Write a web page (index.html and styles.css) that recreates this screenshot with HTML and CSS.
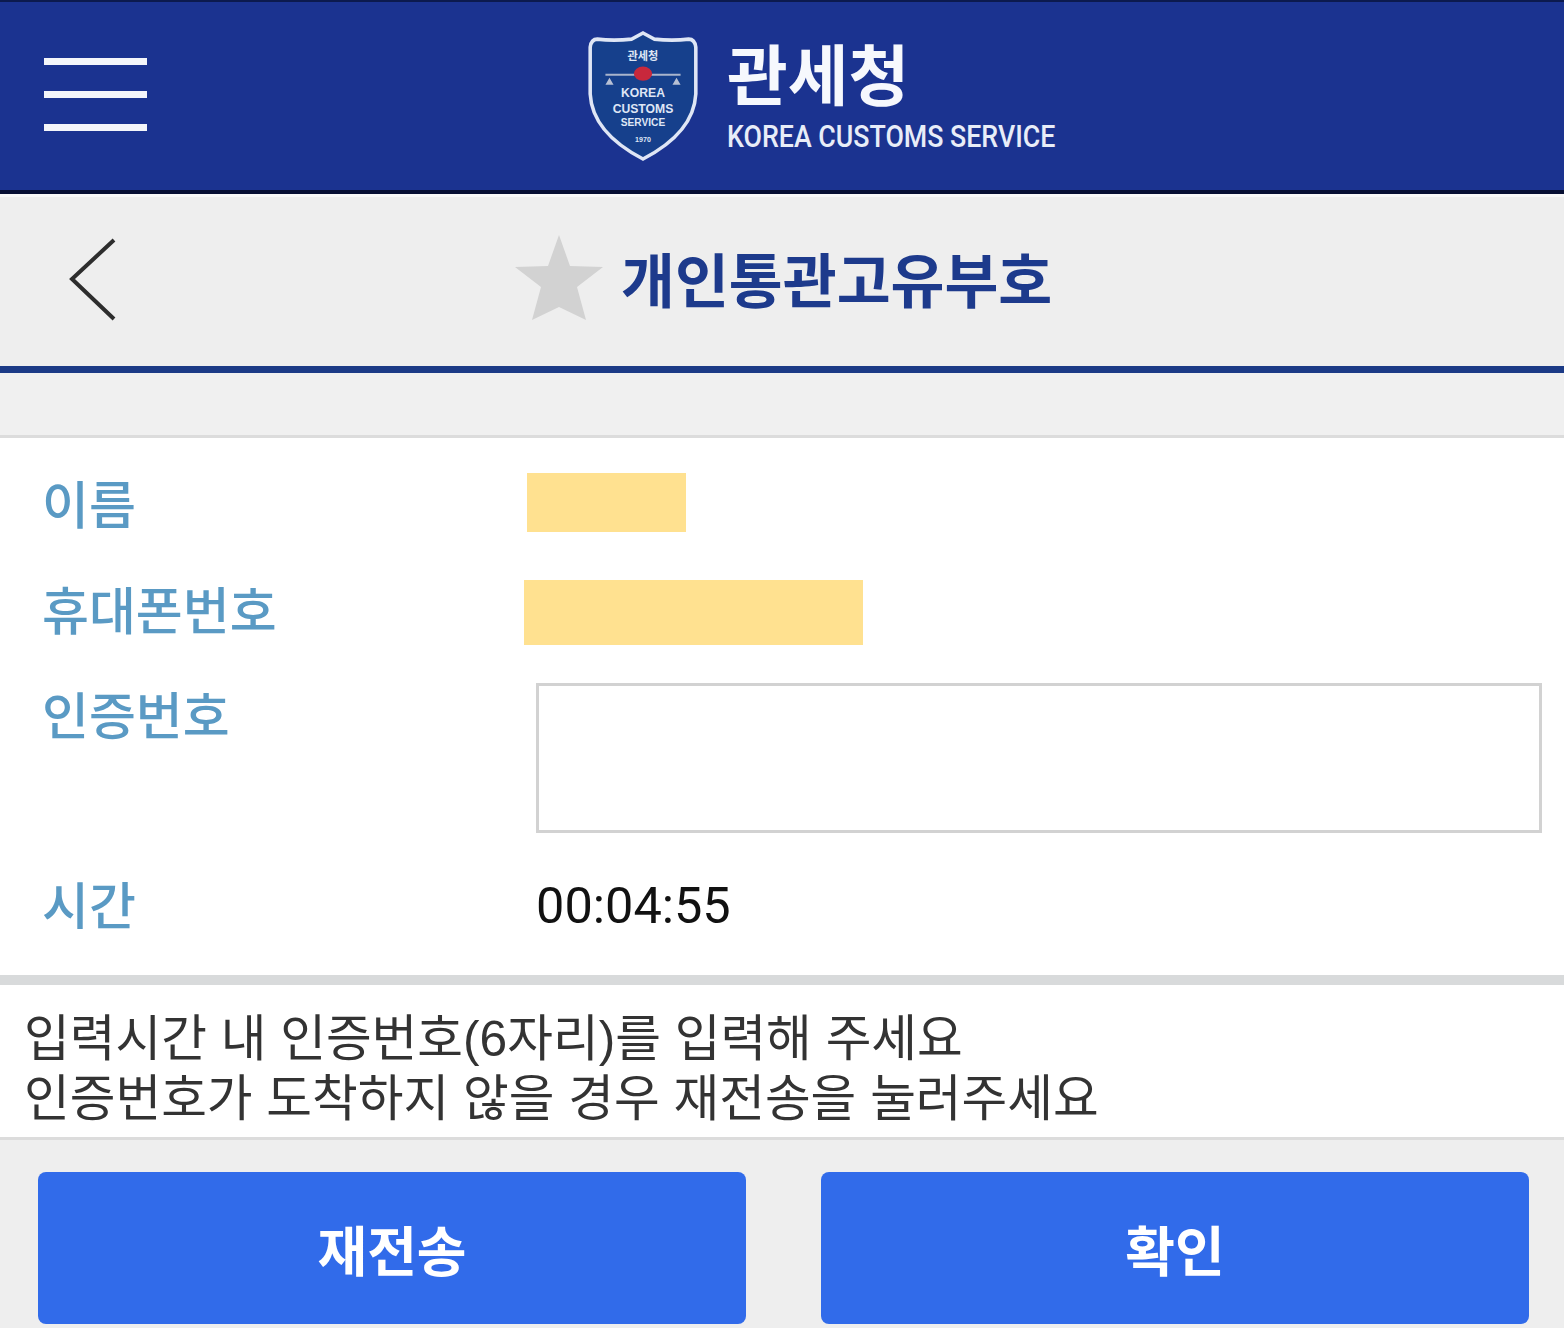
FILE: index.html
```html
<!DOCTYPE html>
<html lang="ko">
<head>
  <meta charset="UTF-8" />
  <meta name="viewport" content="width=device-width, initial-scale=1.0"/>
  <title>개인통관고유부호</title>
  <link rel="stylesheet" href="styles.css">
</head>
<body>
  <header class="top-bar">
    <div class="menu-btn"><span></span><span></span><span></span></div>
    <div class="brand">
      <svg class="shield" viewBox="0 0 110 128" width="112" height="130">
        <path d="M55 2 L66 8 Q84 10 100 8 Q106 8 107 16 L107 62 Q105 100 55 126 Q5 100 3 62 L3 16 Q4 8 10 8 Q26 10 44 8 Z" fill="#16408c" stroke="#dfe6f5" stroke-width="3.5"/>
        <text x="55" y="29" class="shield-top">관세청</text>
        <path d="M18 43 H92" stroke="#a9b4cc" stroke-width="2"/>
        <ellipse cx="55" cy="42" rx="9" ry="7" fill="#c8283c"/>
        <path d="M22 46 l-4 7 h8 Z M88 46 l-4 7 h8 Z" fill="#b7c0d4"/>
        <text x="55" y="65" class="shield-text">KOREA</text>
        <text x="55" y="81" class="shield-text">CUSTOMS</text>
        <text x="55" y="94" class="shield-text small">SERVICE</text>
        <text x="55" y="109" class="shield-text tiny">1970</text>
      </svg>
      <div class="brand-text">
        <div class="brand-name">관세청</div>
        <div class="brand-sub">KOREA CUSTOMS SERVICE</div>
      </div>
    </div>
  </header>

  <div class="title-bar">
    <svg class="back" viewBox="0 0 50 84" width="50" height="84">
      <path d="M45 2 L3 41 L45 81" fill="none" stroke="#2d2d2d" stroke-width="4"/>
    </svg>
    <div class="title">
      <svg class="star" viewBox="0 0 88 86" width="88" height="86">
        <path d="M44 0 L55 31 L88 32 L62 52 L71 85 L44 72 L17 85 L26 52 L0 32 L33 31 Z" fill="#d2d2d2"/>
      </svg>
      <h1>개인통관고유부호</h1>
    </div>
  </div>
  <div class="spacer"></div>

  <section class="form">
    <div class="row row-name">
      <div class="label">이름</div>
      <div class="mask mask-name"></div>
    </div>
    <div class="row row-phone">
      <div class="label">휴대폰번호</div>
      <div class="mask mask-phone"></div>
    </div>
    <div class="row row-code">
      <div class="label">인증번호</div>
      <input class="code-input" type="text">
    </div>
    <div class="row row-time">
      <div class="label">시간</div>
      <div class="time">00:04:55</div>
    </div>
  </section>

  <p class="notice">입력시간 내 인증번호(6자리)를 입력해 주세요<br>인증번호가 도착하지 않을 경우 재전송을 눌러주세요</p>

  <footer class="actions">
    <button class="action-btn">재전송</button>
    <button class="action-btn">확인</button>
  </footer>
</body>
</html>
```

FILE: styles.css
```css
* {
  box-sizing: border-box;
}
html, body {
  height: 100%;
}
body {
  margin: 0;
  background: #eeeeee;
  font-family: "Noto Sans CJK KR", "Noto Sans", sans-serif;
  overflow: hidden;
}
.top-bar {
  height: 194px;
  background: #1b3390;
  border-top: 2px solid #0c1a4e;
  border-bottom: 4px solid #070f33;
  display: flex;
  align-items: center;
  position: relative;
}
.menu-btn {
  position: absolute;
  left: 44px;
  top: 56px;
  width: 103px;
  display: flex;
  flex-direction: column;
  gap: 26px;
}
.menu-btn span {
  height: 7px;
  background: #f4f6fb;
}
.brand {
  margin-left: 587px;
  display: flex;
  align-items: center;
  gap: 28px;
  margin-top: -1px;
}
.shield-top, .shield-text {
  fill: #dfe6f5;
  text-anchor: middle;
  font-family: "Liberation Sans", sans-serif;
  font-weight: bold;
}
.shield-top { font-size: 11px; font-family: "Noto Sans CJK KR", sans-serif; }
.shield-text { font-size: 12px; }
.shield-text.small { font-size: 10px; }
.shield-text.tiny { font-size: 7px; }
.brand-text {
  margin-top: -1px;
}
.brand-name {
  font-size: 66px;
  font-weight: 700;
  line-height: 72px;
  color: #f6f8fd;
}
.brand-sub {
  font-family: "Roboto", sans-serif;
  font-size: 31px;
  font-weight: 500;
  line-height: 36px;
  margin-top: 12px;
  color: #e8edf8;
  white-space: nowrap;
  transform: scaleX(0.863);
  transform-origin: left center;
}
.title-bar {
  height: 179px;
  background: #eeeeee;
  border-top: 3px solid #f8f8f8;
  border-bottom: 7px solid #1b3a86;
  display: flex;
  align-items: center;
  position: relative;
}
.back {
  position: absolute;
  left: 69px;
  top: 41px;
}
.title {
  margin-left: 515px;
  display: flex;
  align-items: center;
  gap: 18px;
  margin-top: -7px;
}
.title h1 {
  margin: 0;
  font-size: 58.6px;
  font-weight: 700;
  line-height: 70px;
  color: #1d3a8c;
  white-space: nowrap;
}
.spacer {
  height: 65px;
  background: #f0f0f0;
  border-bottom: 3px solid #dcdcdc;
}
.form {
  background: #fff;
  height: 537px;
  padding: 35px 22px 0 44px;
}
.row {
  display: flex;
  align-items: center;
}
.label {
  width: 492px;
  flex: none;
  font-size: 51px;
  font-weight: 500;
  line-height: 60px;
  color: #5a9ac4;
  margin-left: -2px;
  margin-right: 2px;
}
.row-name { height: 59px; }
.row-name .label { margin-bottom: 2px; }
.row-phone { height: 65px; margin-top: 48px; }
.row-phone .label { margin-bottom: 10px; }
.row-code { height: 150px; margin-top: 38px; align-items: flex-start; }
.row-time { height: 60px; margin-top: 42px; }
.row-time .label { margin-bottom: 4px; }
.mask {
  background: #ffe190;
}
.mask-name {
  width: 159px;
  height: 59px;
  margin-left: -9px;
}
.mask-phone {
  width: 339px;
  height: 65px;
  margin-left: -12px;
}
.code-input {
  flex: 1;
  height: 150px;
  background: #fff;
  border: 3px solid #d2d2d2;
  outline: none;
}
.time {
  font-family: "Roboto", sans-serif;
  font-size: 50.5px;
  color: #111;
}
.notice {
  margin: 0;
  height: 165px;
  padding: 24px 24px 0;
  background: #fff;
  border-top: 10px solid #d8dadb;
  border-bottom: 3px solid #dcdcdc;
  font-family: "Liberation Sans", "Noto Sans CJK KR", sans-serif;
  font-size: 49.7px;
  line-height: 60px;
  color: #333;
  white-space: nowrap;
}
.actions {
  display: flex;
  justify-content: space-between;
  padding: 32px 35px 0 38px;
}
.action-btn {
  width: 708px;
  height: 152px;
  border: none;
  border-radius: 8px;
  background: #316bea;
  color: #fff;
  font-family: inherit;
  font-size: 54px;
  font-weight: 700;
}
```
